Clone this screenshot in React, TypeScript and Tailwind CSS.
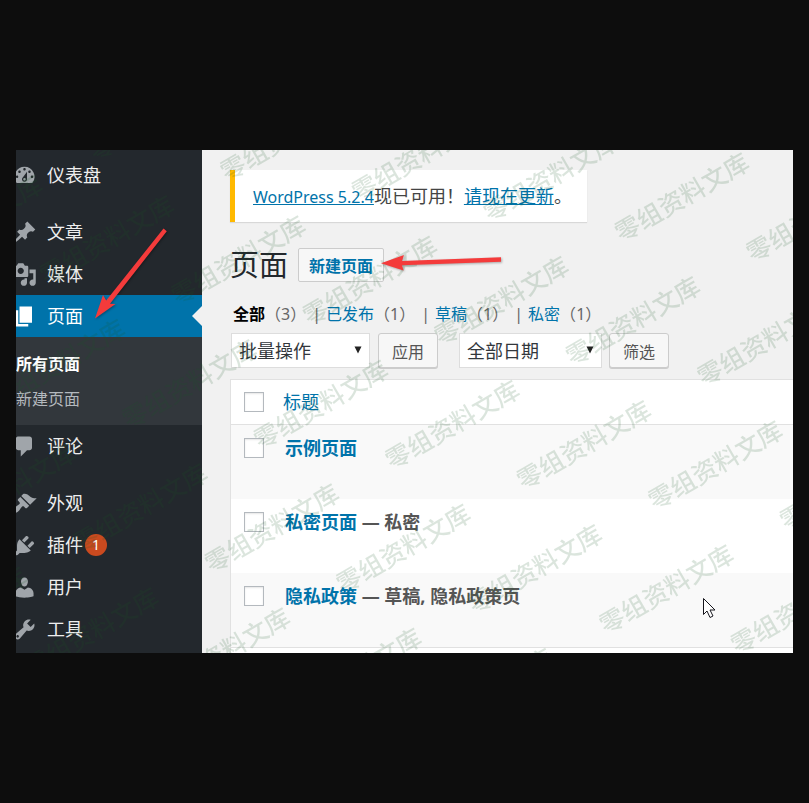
import React from "react";

type MenuItem = {
  label: string;
  icon: string;
  badge?: number;
  active?: boolean;
};

const icons = {
  dashboard:
    "M3.76 16h12.48A7.998 7.998 0 0 0 10 3a7.998 7.998 0 0 0-6.24 13zM10 4c.55 0 1 .45 1 1s-.45 1-1 1-1-.45-1-1 .45-1 1-1zM6 6c.55 0 1 .45 1 1s-.45 1-1 1-1-.45-1-1 .45-1 1-1zm8 0c.55 0 1 .45 1 1s-.45 1-1 1-1-.45-1-1 .45-1 1-1zm-5.37 5.55L12 7v6c0 1.1-.9 2-2 2s-2-.9-2-2c0-.57.24-1.08.63-1.45zM4 10c.55 0 1 .45 1 1s-.45 1-1 1-1-.45-1-1 .45-1 1-1zm12 0c.55 0 1 .45 1 1s-.45 1-1 1-1-.45-1-1 .45-1 1-1zm-5 3c0-.55-.45-1-1-1s-1 .45-1 1 .45 1 1 1 1-.45 1-1z",
  post: "M10.44 3.02l1.82-1.82 6.36 6.35-1.83 1.82c-1.05-.68-2.48-.57-3.41.36l-.75.75c-.92.93-1.04 2.35-.35 3.41l-1.83 1.82-2.41-2.41-2.8 2.79c-.42.42-3.38 2.71-3.8 2.29s1.86-3.39 2.28-3.81l2.79-2.79L4.1 9.36l1.83-1.82c1.05.69 2.48.57 3.4-.36l.75-.75c.93-.92 1.05-2.35.36-3.41z",
  media:
    "M13 11V4c0-.55-.45-1-1-1h-1.67L9 1H5L3.67 3H2c-.55 0-1 .45-1 1v7c0 .55.45 1 1 1h10c.55 0 1-.45 1-1zM7 4.5c1.38 0 2.5 1.12 2.5 2.5S8.38 9.5 7 9.5 4.5 8.38 4.5 7 5.62 4.5 7 4.5zM14 6h5v10.5c0 1.38-1.12 2.5-2.5 2.5S14 17.88 14 16.5s1.12-2.5 2.5-2.5c.17 0 .34.02.5.05V9h-3V6zm-4 8.05V13h2v3.5c0 1.38-1.12 2.5-2.5 2.5S7 17.88 7 16.5 8.12 14 9.5 14c.17 0 .34.02.5.05z",
  page: "M6 15V2h10v13H6zm-1 1h8v2H3V5h2v11z",
  comments:
    "M5 2h9c1.1 0 2 .9 2 2v7c0 1.1-.9 2-2 2h-2l-5 5v-5H5c-1.1 0-2-.9-2-2V4c0-1.1.9-2 2-2z",
  appearance:
    "M14.48 11.06L7.41 3.99l1.5-1.5c.5-.56 2.3-.47 3.51.32 1.21.8 1.43 1.28 2.91 2.1 1.18.64 2.45 1.26 4.45.85zm-.71.71L6.7 4.7 4.93 6.47c-.39.39-.39 1.02 0 1.41l1.06 1.06c.39.39.39 1.03 0 1.42-.6.6-1.43 1.11-2.21 1.69-.35.26-.7.53-1.01.84C1.43 14.23.4 16.08 1.4 17.07c.99 1 2.84-.03 4.18-1.36.31-.31.58-.66.85-1.02.57-.78 1.08-1.61 1.69-2.21.39-.39 1.02-.39 1.41 0l1.06 1.06c.39.39 1.02.39 1.41 0z",
  plugins:
    "M13.11 4.36L9.87 7.6 8 5.73l3.24-3.24c.35-.34 1.05-.2 1.56.32.52.51.66 1.21.31 1.55zm-8 1.77l.91-1.12 9.01 9.01-1.19.84c-.71.71-2.63 1.16-3.82 1.16H6.14L4.9 17.26c-.59.59-1.54.59-2.12 0-.59-.58-.59-1.53 0-2.12l1.24-1.24v-3.88c0-1.13.4-3.19 1.09-3.89zm7.26 3.97l3.24-3.24c.34-.35 1.04-.21 1.55.31.52.51.66 1.21.31 1.55l-3.24 3.25z",
  users:
    "M10 9.25c-2.27 0-2.73-3.44-2.73-3.44C7 4.02 7.82 2 9.97 2c2.16 0 2.98 2.02 2.71 3.81 0 0-.41 3.44-2.68 3.44zm0 2.57L12.72 10c2.39 0 4.52 2.33 4.52 4.53v2.49s-3.65 1.13-7.24 1.13c-3.65 0-7.24-1.13-7.24-1.13v-2.49c0-2.25 1.94-4.48 4.47-4.48z",
  tools:
    "M16.68 9.77c-1.34 1.34-3.3 1.67-4.95.99l-5.41 6.52c-.99.99-2.59.99-3.58 0s-.99-2.59 0-3.57l6.52-5.42c-.68-1.65-.35-3.61.99-4.95 1.28-1.28 3.12-1.62 4.72-1.06l-2.89 2.89 2.82 2.82 2.86-2.87c.53 1.58.18 3.39-1.08 4.65zM3.81 16.21c.4.39 1.04.39 1.43 0 .4-.4.4-1.04 0-1.43-.39-.4-1.03-.4-1.43 0-.39.39-.39 1.03 0 1.43z",
};

const groups: MenuItem[][] = [
  [{ label: "仪表盘", icon: icons.dashboard }],
  [
    { label: "文章", icon: icons.post },
    { label: "媒体", icon: icons.media },
    { label: "页面", icon: icons.page, active: true },
    { label: "评论", icon: icons.comments },
  ],
  [
    { label: "外观", icon: icons.appearance },
    { label: "插件", icon: icons.plugins, badge: 1 },
    { label: "用户", icon: icons.users },
    { label: "工具", icon: icons.tools },
  ],
];

const views = [
  { label: "全部", count: 3, current: true },
  { label: "已发布", count: 1 },
  { label: "草稿", count: 1 },
  { label: "私密", count: 1 },
];

const rows = [
  { title: "示例页面", state: "" },
  { title: "私密页面", state: "私密" },
  { title: "隐私政策", state: "草稿, 隐私政策页" },
];

function SidebarItem({ item }: { item: MenuItem }) {
  return (
    <li>
      <a
        href="#"
        aria-current={item.active ? "page" : undefined}
        className={
          item.active
            ? "relative flex h-[42px] items-center bg-[#0073aa] text-white"
            : "relative flex h-[42px] items-center text-[#eeeeee]"
        }
      >
        <svg
          viewBox="0 0 20 20"
          aria-hidden="true"
          className={
            item.active
              ? "-ml-1 size-[25px] shrink-0 fill-white"
              : "-ml-1 size-[25px] shrink-0 fill-[#a0a5aa]"
          }
        >
          <path d={item.icon} />
        </svg>
        <span className="ml-[10px]">{item.label}</span>
        {item.badge && (
          <span className="ml-[2px] flex size-[22px] items-center justify-center rounded-full bg-[#ca4a1f] text-sm text-white">
            {item.badge}
          </span>
        )}
        {item.active && (
          <svg
            viewBox="0 0 10 20"
            aria-hidden="true"
            className="absolute right-0 top-[11px] h-5 w-[10px] fill-[#f1f1f1]"
          >
            <path d="M10 0v20L0 10z" />
          </svg>
        )}
      </a>
      {item.active && (
        <ul className="flex h-[88px] flex-col justify-center bg-[#32373c] pt-[2px] text-base leading-[35px]">
          <li>
            <a href="#" className="block font-bold text-white">
              所有页面
            </a>
          </li>
          <li>
            <a href="#" className="block text-[#b4b9be]">
              新建页面
            </a>
          </li>
        </ul>
      )}
    </li>
  );
}

function Dropdown({ label, text, width }: { label: string; text: string; width: string }) {
  return (
    <div className={"relative " + width}>
      <select
        aria-label={label}
        className="h-[35px] w-full appearance-none border border-[#dddddd] bg-white px-[7px] text-lg leading-[30px] text-[#32373c]"
      >
        <option>{text}</option>
      </select>
      <svg
        viewBox="0 0 8 8"
        aria-hidden="true"
        className="pointer-events-none absolute right-2 top-[13px] size-2 fill-[#222222]"
      >
        <path d="M0.500 0.500h7L4 7.500z" />
      </svg>
    </div>
  );
}

function ActionButton({ children }: { children: React.ReactNode }) {
  return (
    <button
      type="button"
      className="h-[35px] rounded-[3px] border border-[#cccccc] bg-[#f7f7f7] px-[13px] pt-[2px] text-base text-[#555555] shadow-[0_1px_0_#cccccc]"
    >
      {children}
    </button>
  );
}

function Tick({ label }: { label: string }) {
  return (
    <input
      type="checkbox"
      aria-label={label}
      className="block size-5 appearance-none border border-[#b4b9be] bg-white shadow-[inset_0_1px_2px_rgba(0,0,0,0.1)]"
    />
  );
}

function Watermark() {
  const marks: { x: number; y: number }[] = [];
  for (let j = -1; j <= 5; j++) {
    for (let i = -4; i <= 8; i++) {
      const x = 217 + i * 131.5 - j * 49;
      const y = 18 + i * 20.3 + j * 123.9;
      if (x > -130 && x < 785 && y > -12 && y < 580) {
        marks.push({ x, y });
      }
    }
  }
  return (
    <svg
      aria-hidden="true"
      className="pointer-events-none absolute inset-0 size-full overflow-hidden fill-[#165823] text-[25px] font-medium opacity-15"
    >
      {marks.map((m) => (
        <text
          key={m.x + "/" + m.y}
          transform={`translate(${m.x} ${m.y}) rotate(-30)`}
          x="-12"
          y="9"
        >
          零组资料文库
        </text>
      ))}
    </svg>
  );
}

function Annotations() {
  return (
    <svg
      aria-hidden="true"
      className="pointer-events-none absolute left-0 top-0 h-[503px] w-[777px] overflow-hidden"
    >
      <g className="fill-[#f43b3b] drop-shadow-[1px_1px_1px_rgba(0,0,0,0.3)]">
        <path d="M147.500 78.500l3.300 2.700L94 153.700l5.500 .3L79 168.500l8-23.500 3.200 5.500z" />
        <path d="M485 107.300v4.500L386 115.200l1.500 5.300L365 113.300l23-8.300-2 6z" />
      </g>
      <path
        d="M687.500 448.500v16l3.500-3.500 3 6.500 3-1.500-3-6h5z"
        className="fill-white stroke-[#16161d]"
      />
    </svg>
  );
}

export default function App() {
  return (
    <div className="min-h-screen bg-[#0d0d0d] px-4 py-[150px] font-['Noto_Sans','Noto_Sans_CJK_SC',sans-serif] text-lg leading-6">
      <div className="relative flex overflow-hidden bg-[#f1f1f1]">
        <nav
          aria-label="主菜单"
          className="flex w-[186px] shrink-0 flex-col gap-[15px] bg-[#23282d] pb-[3px] pt-1"
        >
          {groups.map((group) => (
            <ul key={group[0].label}>
              {group.map((item) => (
                <SidebarItem key={item.label} item={item} />
              ))}
            </ul>
          ))}
        </nav>

        <main className="flex min-w-0 flex-1 flex-col pl-7 pt-5 text-[#444444]">
          <div className="flex h-[52px] w-fit items-center border-l-[5px] border-[#ffb900] bg-white pl-[18px] pr-[15px] shadow-[0_1px_1px_rgba(0,0,0,0.1)]">
            <p>
              <a href="#" className="text-base text-[#0073aa] underline">
                WordPress 5.2.4
              </a>
              现已可用！
              <a href="#" className="text-[#0073aa] underline">
                请现在更新
              </a>
              。
            </p>
          </div>

          <div className="mt-[26px] flex h-[34px] items-center gap-[10px]">
            <h1 className="text-[29px] text-[#23282d]">页面</h1>
            <a
              href="#"
              className="flex h-[34px] items-center rounded-[2px] border border-[#cccccc] bg-[#f7f7f7] px-[10px] pt-[2px] text-base font-bold text-[#0073aa]"
            >
              新建页面
            </a>
          </div>

          <ul className="ml-[3px] mt-5 flex gap-[6px] text-base">
            {views.map((view, index) => (
              <li key={view.label} className="flex gap-[5px]">
                {index > 0 && <span className="text-[#666666]">|</span>}
                <a href="#" className={view.current ? "font-bold text-black" : "text-[#0073aa]"}>
                  {view.label}
                  <span className="font-normal text-[#666666]">（{view.count}）</span>
                </a>
              </li>
            ))}
          </ul>

          <div className="mt-[7px] flex pl-px">
            <Dropdown label="批量操作" text="批量操作" width="w-[139px]" />
            <div className="ml-2 mr-[21px]">
              <ActionButton>应用</ActionButton>
            </div>
            <Dropdown label="按日期筛选" text="全部日期" width="w-[143px]" />
            <div className="ml-[7px]">
              <ActionButton>筛选</ActionButton>
            </div>
          </div>

          <div className="mt-[11px] flex-1 border-l border-t border-[#e1e1e1] bg-white">
            <table className="w-full border-separate border-spacing-0 border-b border-[#e1e1e1] text-left">
              <thead>
                <tr className="h-[45px]">
                  <th className="w-[52px] border-b border-[#e1e1e1] pl-[13px]">
                    <Tick label="全选" />
                  </th>
                  <th className="border-b border-[#e1e1e1] font-normal">
                    <a href="#" className="text-[#0073aa]">
                      标题
                    </a>
                  </th>
                </tr>
              </thead>
              <tbody>
                {rows.map((row) => (
                  <tr key={row.title} className="h-[74px] align-top odd:bg-[#f9f9f9]">
                    <td className="pl-[13px] pt-[13px]">
                      <Tick label={"选择" + row.title} />
                    </td>
                    <td className="pl-[2px] pt-[11px] font-bold text-[#555555]">
                      <a href="#" className="text-[#0073aa]">
                        {row.title}
                      </a>
                      {row.state && " — " + row.state}
                    </td>
                  </tr>
                ))}
              </tbody>
            </table>
          </div>
        </main>

        <Watermark />
        <Annotations />
      </div>
    </div>
  );
}
